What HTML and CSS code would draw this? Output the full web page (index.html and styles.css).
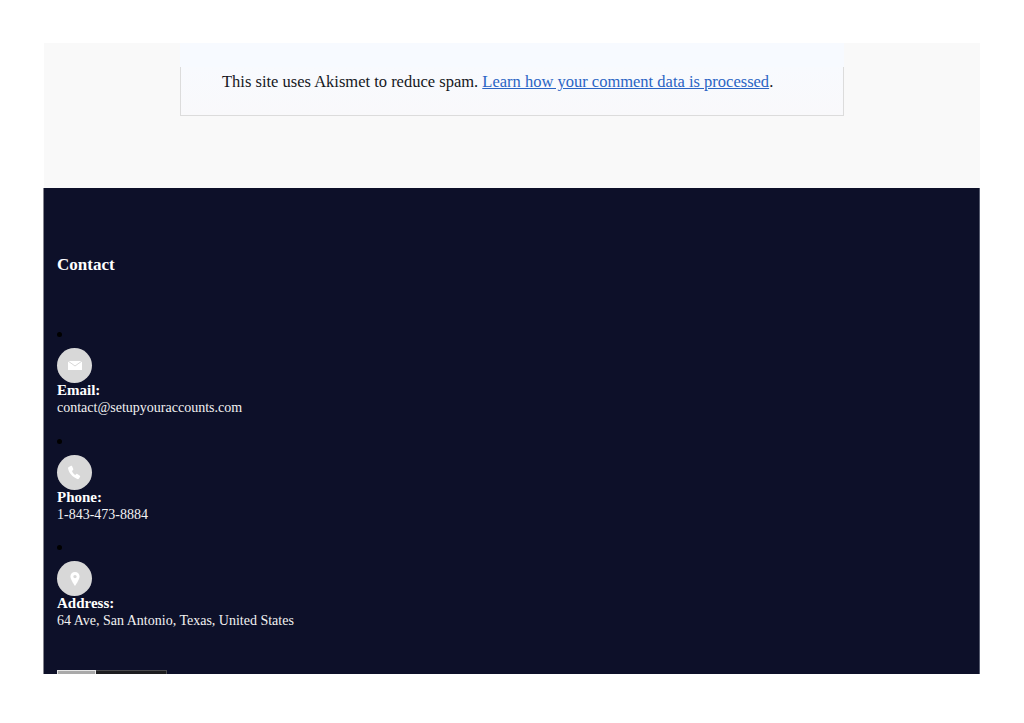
FILE: index.html
```html
<!DOCTYPE html>
<html lang="en">
<head>
<meta charset="utf-8">
<title>Contact</title>
<link rel="stylesheet" href="styles.css">
</head>
<body>
<div class="page">
  <section class="upper">
    <div class="notice">
      <div class="notice-top"></div>
      <div class="notice-body">
        <p class="notice-text">This site uses Akismet to reduce spam. <a href="#">Learn how your comment data is processed</a>.</p>
      </div>
    </div>
  </section>
  <footer class="footer">
    <h2 class="footer-title">Contact</h2>
    <ul class="contact-list">
      <li class="contact-item">
        <span class="bullet"></span>
        <span class="icon-circle">
          <svg width="16" height="16" viewBox="0 0 16 16"><rect x="1" y="3" width="14" height="9" fill="#fff"/><path fill="none" stroke="#d8d8d8" stroke-width="1" d="M1 3 8 8 15 3"/></svg>
        </span>
        <strong class="contact-label">Email:</strong>
        <span class="contact-value">contact@setupyouraccounts.com</span>
      </li>
      <li class="contact-item">
        <span class="bullet"></span>
        <span class="icon-circle">
          <svg width="16" height="16" viewBox="0 0 16 16"><path fill="#fff" d="M1.800 3 4 1.800c.4-.2.800-.1 1 .3l1.300 3c.1.300 0 .6-.2.800L5 6.900c.6 1.700 1.700 3.100 3.200 4l1.200-.9c.3-.2.600-.2.900 0l2.600 1.800c.3.300.4.700.2 1l-1.100 1.700c-.4.600-1.100.8-1.800.5C5.400 13 1.900 9 1 4.300c-.1-.5.300-1 .8-1.300z"/></svg>
        </span>
        <strong class="contact-label">Phone:</strong>
        <span class="contact-value">1-843-473-8884</span>
      </li>
      <li class="contact-item">
        <span class="bullet"></span>
        <span class="icon-circle">
          <svg width="16" height="16" viewBox="0 0 16 16"><path fill="#fff" fill-rule="evenodd" d="M8 1C5.300 1 3.400 3 3.400 5.500 3.400 8.500 8 15 8 15s4.600-6.500 4.600-9.500C12.600 3 10.700 1 8 1zm0 2.900a1.700 1.700 0 1 1 0 3.400 1.700 1.700 0 0 1 0-3.400z"/></svg>
        </span>
        <strong class="contact-label">Address:</strong>
        <span class="contact-value">64 Ave, San Antonio, Texas, United States</span>
      </li>
    </ul>
    <div class="badge"><span class="badge-left"></span><span class="badge-right"></span></div>
  </footer>
</div>
</body>
</html>
```
FILE: styles.css
```css
html, body { margin: 0; padding: 0; background: #fff; }
body {
  height: 723px;
  overflow: hidden;
  padding: 43px 44px 0 43px;
  box-sizing: border-box;
  font-family: "Liberation Serif", "DejaVu Serif", serif;
}
.page {
  height: 631px;
  overflow: hidden;
  display: flex;
  flex-direction: column;
}
.upper {
  height: 145px;
  flex: none;
  margin-left: 1px;
  background: #f9f9f9;
  padding-left: 136px;
}
.notice {
  width: 664px;
  display: flex;
  flex-direction: column;
}
.notice-top {
  height: 24px;
  background: #f7faff;
}
.notice-body {
  height: 47px;
  background: linear-gradient(#f8fafe, #f9f9fb);
  border: 1px solid #dcdcdc;
  border-top: 0;
  padding-bottom: 1px;
}
.notice-text {
  margin: 4px 0 0 41px;
  font-size: 16.500px;
  line-height: 22px;
  color: #15171c;
  white-space: nowrap;
}
.notice-text a {
  color: #2a64c4;
  text-decoration: underline;
}
.footer {
  flex: 1;
  background: #0d1029;
  padding: 0 13px;
  color: #fff;
  box-sizing: border-box;
  border-left: 1px solid #85858f;
  border-right: 1px solid #555a6e;
}
.footer-title {
  margin: 66px 0 0;
  font-size: 17px;
  line-height: 21px;
  font-weight: 700;
  color: #fff;
}
.contact-list {
  list-style: none;
  margin: 57px 0 0;
  padding: 0;
  display: flex;
  flex-direction: column;
  gap: 21.500px;
}
.contact-item {
  display: flex;
  flex-direction: column;
  align-items: flex-start;
}
.bullet {
  width: 5px;
  height: 5px;
  border-radius: 50%;
  background: #000;
  margin-bottom: 11px;
}
.icon-circle {
  width: 35px;
  height: 35px;
  border-radius: 50%;
  background: #d8d8d8;
  display: flex;
  align-items: center;
  justify-content: center;
}
.contact-label {
  font-size: 15px;
  line-height: 16px;
  margin-top: -1px;
  color: #fff;
}
.contact-value {
  font-size: 14px;
  line-height: 18px;
  margin-top: 1px;
  color: #f2f2f2;
}
.badge {
  display: flex;
  width: 110px;
  height: 12px;
  margin-top: 40px;
}
.badge-left {
  width: 39px;
  background: #a9a9a9;
  border: 1px solid #e5e5e5;
  border-bottom: 0;
  box-sizing: border-box;
}
.badge-right {
  flex: 1;
  background: #1d1d1f;
  border: 1px solid #4a4a4c;
  border-bottom: 0;
  border-left: 0;
}
```
